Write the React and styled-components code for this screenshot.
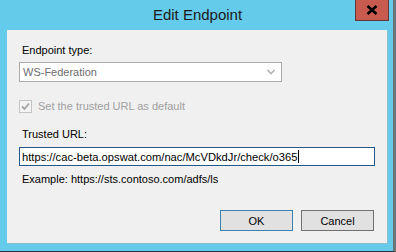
import React from 'react'
import styled, {createGlobalStyle} from 'styled-components'

const Global = createGlobalStyle`
body{
  margin:0;
  background:#65cbea;
  font-family:"Liberation Sans", Arial, sans-serif;
}
`

function App() {
  return (
    <Window>
      <Global/>
      <TitleBar>
        <Title>Edit Endpoint</Title>
        <CloseButton>
          <svg width="12" height="10" viewBox="0 0 12 10">
            <path d="M1.5 1 L10.5 9 M10.5 1 L1.5 9" stroke="#000" strokeWidth="2.6"/>
          </svg>
        </CloseButton>
      </TitleBar>
      <Client>
        <Label>Endpoint type:</Label>
        <Select>
          <span>WS-Federation</span>
          <svg width="8" height="6" viewBox="0 0 8 6">
            <path d="M0.5 1 L4 4.5 L7.5 1" stroke="#b4b4b4" strokeWidth="1.6" fill="none"/>
          </svg>
        </Select>
        <CheckRow>
          <CheckBox>
            <svg width="11" height="11" viewBox="0 0 11 11">
              <path d="M2 5.5 L4.5 8 L9 2.5" stroke="#a5a5a5" strokeWidth="1.8" fill="none"/>
            </svg>
          </CheckBox>
          <span>Set the trusted URL as default</span>
        </CheckRow>
        <Label spaced>Trusted URL:</Label>
        <TextInput>
          https://cac-beta.opswat.com/nac/McVDkdJr/check/o365<Caret/>
        </TextInput>
        <Hint>Example: https://sts.contoso.com/adfs/ls</Hint>
        <Buttons>
          <Button primary>OK</Button>
          <Button>Cancel</Button>
        </Buttons>
      </Client>
    </Window>
  )
}

export default App

const Window=styled.div`
width:396px;
height:252px;
box-sizing:border-box;
background:#65cbea;
border-right:3px solid #6e7478;
border-bottom:1px solid #24343a;
padding:0 6px 8px 7px;
display:flex;
flex-direction:column;
`

const TitleBar=styled.div`
position:relative;
height:30px;
display:flex;
align-items:center;
justify-content:center;
`

const Title=styled.div`
font-size:15px;
color:#1a1a1a;
margin-top:-1px;
margin-left:1px;
`

const CloseButton=styled.div`
position:absolute;
top:0;
right:-2px;
width:34px;
height:21px;
box-sizing:border-box;
background:#c75b50;
border:1px solid #5c3a36;
border-top:none;
display:flex;
align-items:center;
justify-content:center;
`

const Client=styled.div`
flex:1;
background:#f0f0f0;
box-shadow:1px 1px 0 #8fbfcf;
padding:14px 12px 0 12px;
display:flex;
flex-direction:column;
font-size:11px;
color:#000;
`

const Label=styled.div`
line-height:13px;
padding-left:3px;
margin-top:${p=>p.spaced?'15px':'0'};
`

const Select=styled.div`
margin-top:5px;
width:263px;
height:20px;
box-sizing:border-box;
background:#fff;
border:1px solid #ababab;
display:flex;
align-items:center;
justify-content:space-between;
padding:0 6px 0 3px;
color:#6d6d6d;
`

const CheckRow=styled.div`
margin-top:18px;
display:flex;
align-items:center;
gap:6px;
color:#a0a0a0;
line-height:13px;
`

const CheckBox=styled.div`
width:13px;
height:13px;
box-sizing:border-box;
border:1px solid #c4c4c4;
background:#f4f4f4;
display:flex;
align-items:center;
justify-content:center;
`

const TextInput=styled.div`
margin-top:6px;
width:356px;
height:19px;
box-sizing:border-box;
border:1px solid #25588a;
background:#fff;
padding:0 2px;
display:flex;
align-items:center;
white-space:nowrap;
font-size:11.2px;
`

const Caret=styled.span`
display:inline-block;
width:1px;
height:13px;
margin-left:1px;
background:#000;
`

const Hint=styled.div`
margin-top:7px;
padding-left:3px;
line-height:13px;
`

const Buttons=styled.div`
margin-top:24px;
display:flex;
justify-content:flex-end;
gap:8px;
padding-right:1px;
`

const Button=styled.div`
width:73px;
height:21px;
box-sizing:border-box;
border:1px solid ${p=>p.primary?'#3c7fb1':'#707070'};
background:#e1e1e1;
display:flex;
align-items:center;
justify-content:center;
`
